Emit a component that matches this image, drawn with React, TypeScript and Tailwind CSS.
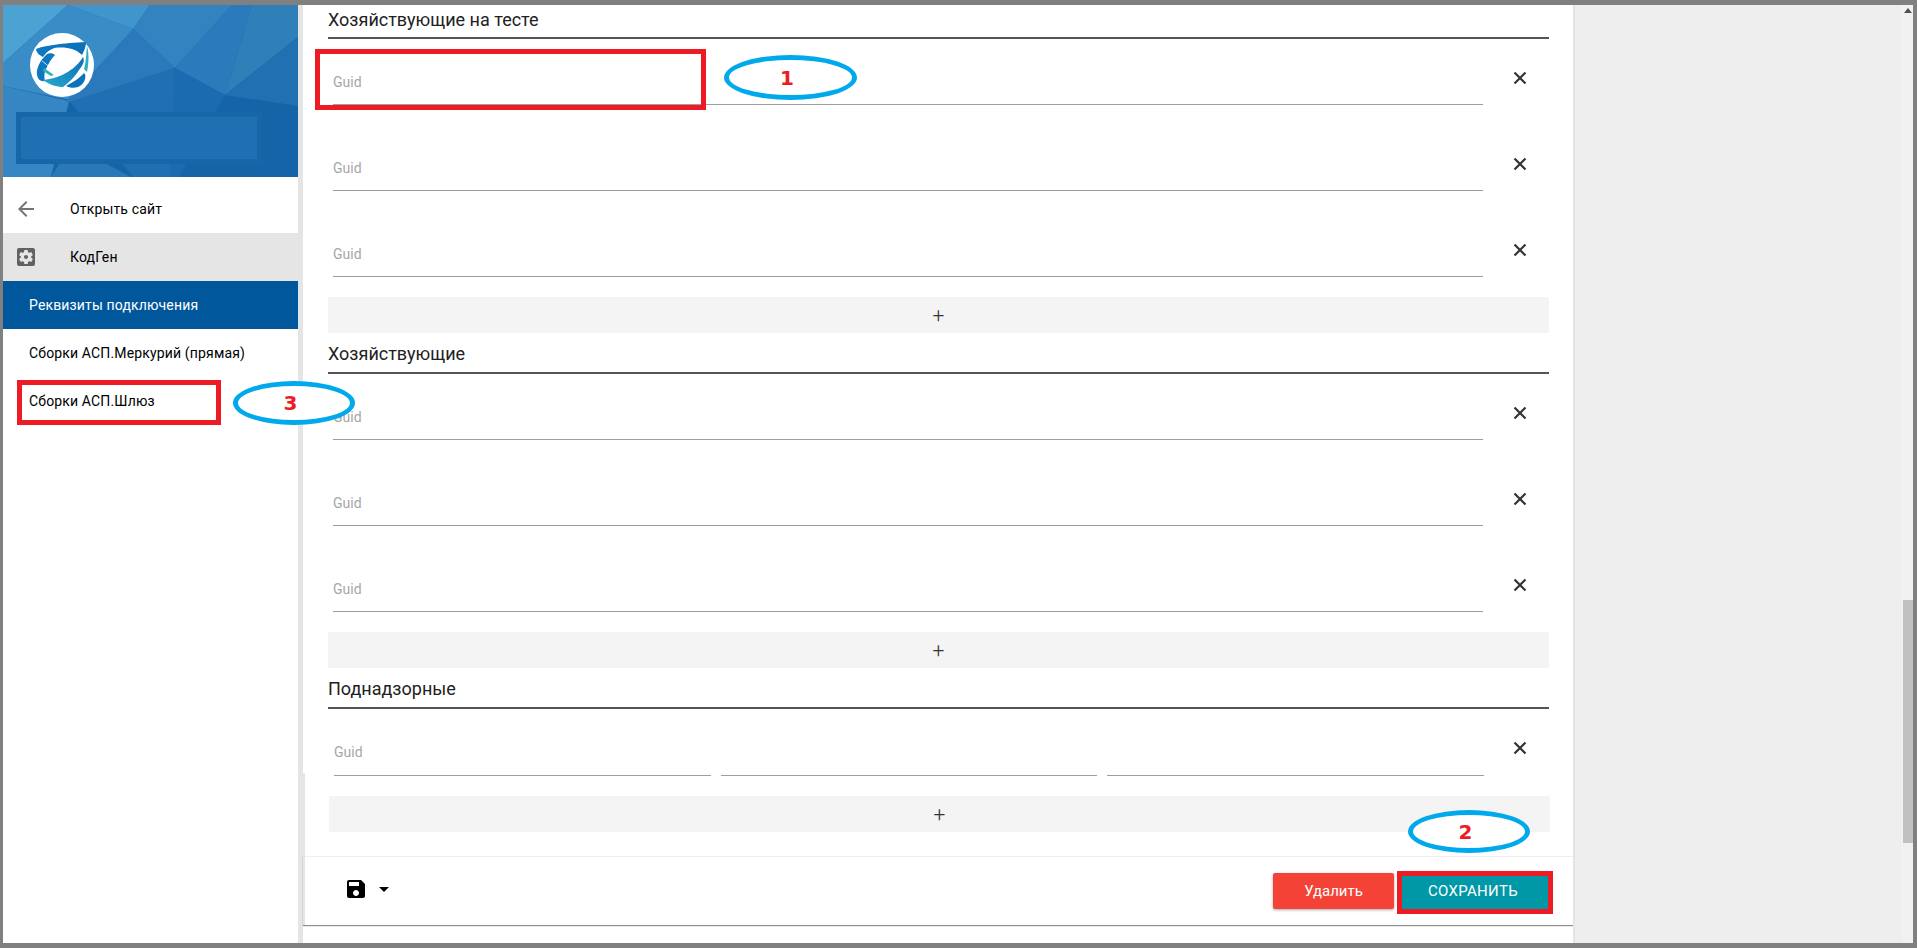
import React from "react";
import { MdArrowBack, MdSettingsApplications, MdSave, MdArrowDropDown } from "react-icons/md";

const roboto = "font-['Roboto','Liberation_Sans',sans-serif]";

function HeaderArt() {
  const facets: [string, string][] = [
    ["0,0 295,0 295,172 0,172", "#1664a8"],
    ["0,0 65,0 0,58", "#4aa3d2"],
    ["65,0 130,24 67,95 0,81 0,58", "#3a8cc7"],
    ["65,0 147,0 130,24", "#4195cd"],
    ["147,0 229,0 172,63 130,24", "#3383c0"],
    ["229,0 249,0 222,90 172,63", "#2b7abb"],
    ["249,0 295,0 295,32 222,90", "#2f7fb9"],
    ["295,32 295,101 222,90", "#2070b2"],
    ["130,24 172,63 67,97 64,95", "#2b79ba"],
    ["0,81 66,96 48,172 0,172", "#3586c3"],
    ["67,97 172,63 168,172 130,172", "#1f6fb2"],
    ["172,63 222,90 176,172 168,172", "#1b6bb0"],
    ["48,172 68,140 128,172", "#2a78b8"],
  ];
  return (
    <svg viewBox="0 0 295 172" className="block h-full w-full" preserveAspectRatio="none">
      {facets.map(([p, c]) => (
        <polygon key={p} points={p} fill={c} />
      ))}
    </svg>
  );
}

function Logo() {
  return (
    <svg viewBox="0 0 64 64" className="h-[64px] w-[64px]">
      <defs>
        <linearGradient id="lg1" x1="0" y1="1" x2="1" y2="0">
          <stop offset="0" stopColor="#2aa9c6" />
          <stop offset="0.45" stopColor="#1b8fc6" />
          <stop offset="1" stopColor="#0a6fb8" />
        </linearGradient>
        <linearGradient id="lg2" x1="0" y1="0" x2="1" y2="0">
          <stop offset="0" stopColor="#0f78c2" />
          <stop offset="1" stopColor="#0b70b9" />
        </linearGradient>
      </defs>
      <circle cx="32" cy="32" r="32" fill="#fff" />
      <path d="M6 16C12 13 34 10 56 9C56 14 54 18 52 22C46 16 38 14 28 14.5C22 15 17 18 13 24C9 22 6 19 6 16Z" fill="url(#lg2)" />
      <path d="M17 21C10 27 6 36 7 42C8 47 11 49 15 48C14 44 14 39 17 34C19 30 21 26 25 22C23 20 19 20 17 21Z" fill="#0c78c2" />
      <path d="M53 24C47 34 34 45 13 47C20 52 27 54 33 54C38 50 45 44 49 37C53 32 55 28 53 24Z" fill="url(#lg1)" />
      <path d="M57 13C59 20 59 29 57 39L54 36C56 30 56 22 57 13Z" fill="#2eb0bf" />
      <path d="M36 53C44 57 53 54 55 46C56 43 55 41 54 40C50 45 43 49 36 53Z" fill="#0c72bc" />
      <path d="M14 35L24 42L21 43L13 38Z" fill="#2eb0bf" />
      <path d="M12 28C16 31 20 34 26 40" stroke="#fff" strokeWidth="0.8" fill="none" />
    </svg>
  );
}

function CloseIcon() {
  return (
    <svg viewBox="0 0 20 20" className="block h-[20px] w-[20px]" fill="none" stroke="#333333" strokeWidth="2.2">
      <path d="M4.5 4.5L15.5 15.5M15.5 4.5L4.5 15.5" />
    </svg>
  );
}

function GuidRow({ triple = false }: { triple?: boolean }) {
  const input = (placeholder?: string) => (
    <input
      placeholder={placeholder}
      readOnly
      className={`h-[45px] w-full min-w-0 flex-1 border-b border-[#9e9e9e] bg-transparent text-sm outline-none placeholder:text-[#a6a6a6] ${roboto} ${
        triple ? "pb-[2px]" : ""
      }`}
    />
  );
  return (
    <div className={`flex h-[66px] ${triple ? "pl-[6px]" : "pl-[5px]"}`}>
      <div className="mt-[21px] flex w-[1150px] gap-[10px] self-start">
        {input("Guid")}
        {triple && input()}
        {triple && input()}
      </div>
      <div className={`mt-[29px] ml-[27px] h-[20px] w-[20px] ${triple ? "-translate-x-px -translate-y-px" : ""}`}>
        <CloseIcon />
      </div>
    </div>
  );
}

function AddButton({ shifted = false }: { shifted?: boolean }) {
  return (
    <div
      className={`mt-5 flex h-[36px] items-center justify-center rounded-[2px] bg-[#f4f4f4] text-[21px] font-light leading-none text-[#333333] ${roboto} ${
        shifted ? "translate-x-px" : ""
      }`}
    >
      +
    </div>
  );
}

function Section({ title, first = false, children }: { title: string; first?: boolean; children: React.ReactNode }) {
  return (
    <section>
      <div
        className={`flex items-end border-b-2 border-[#555555] text-lg leading-[22px] text-[#212121] ${roboto} ${
          first ? "h-[34px] pb-[6px]" : "h-[41px] pb-[7px]"
        }`}
      >
        {title}
      </div>
      {children}
    </section>
  );
}

function NavRow({ children, className = "" }: { children: React.ReactNode; className?: string }) {
  return (
    <div className={`flex h-[48px] items-center text-sm tracking-[0.15px] ${roboto} ${className}`}>{children}</div>
  );
}

function Bubble({ n, className }: { n: string; className: string }) {
  return (
    <div
      className={`absolute flex items-center justify-center rounded-[50%] border-[5px] border-[#00a8ec] bg-white pr-[7px] text-[20px] font-bold leading-none text-[#ed1c24] font-['DejaVu_Sans',sans-serif] ${className}`}
    >
      {n}
    </div>
  );
}

export default function App() {
  return (
    <div className="relative flex h-[948px] w-[1917px] overflow-hidden bg-[#808080] pt-[5px] pr-[4px] pb-[5px] pl-[3px]">
      {/* Sidebar */}
      <aside className="flex w-[295px] shrink-0 flex-col bg-white">
        <div className="relative h-[172px]">
          <HeaderArt />
          <div className="absolute top-[28px] left-[27px]">
            <Logo />
          </div>
          <div className="absolute top-[107px] left-[13px] h-[52px] w-[246px] border-[5px] border-[#1766a8] bg-[#1f6fb3]" />
        </div>
        <div className="pt-2">
          <NavRow className="text-black">
            <MdArrowBack size={24} className="ml-[11px] text-[#757575]" />
            <span className="ml-[32px]">Открыть сайт</span>
          </NavRow>
          <NavRow className="bg-[#e5e5e5] text-black">
            <MdSettingsApplications size={24} className="ml-[11px] text-[#616161]" />
            <span className="ml-[32px]">КодГен</span>
          </NavRow>
          <NavRow className="bg-[#01579b] pl-[26px] text-white">Реквизиты подключения</NavRow>
          <NavRow className="pl-[26px] text-black">Сборки АСП.Меркурий (прямая)</NavRow>
          <NavRow className="pl-[26px] text-black">Сборки АСП.Шлюз</NavRow>
        </div>
      </aside>

      {/* Divider */}
      <div className="w-[5px] shrink-0 bg-[#e5e5e5]" />

      {/* Main */}
      <main className="flex w-[1270px] shrink-0 flex-col bg-white">
        <div className="pr-[24px] pl-[25px]">
          <Section title="Хозяйствующие на тесте" first>
            <GuidRow />
            <div className="mt-5"><GuidRow /></div>
            <div className="mt-5"><GuidRow /></div>
            <AddButton />
          </Section>
          <Section title="Хозяйствующие">
            <GuidRow />
            <div className="mt-5"><GuidRow /></div>
            <div className="mt-5"><GuidRow /></div>
            <AddButton />
          </Section>
          <Section title="Поднадзорные">
            <div className="pt-px">
              <GuidRow triple />
            </div>
            <AddButton shifted />
          </Section>
        </div>
        <footer className="mt-6 flex h-[69px] items-center border-t border-[#eeeeee] pr-[25px] pl-[41px] shadow-[0_1px_1px_rgba(0,0,0,0.45)]">
          <div className="mb-1 flex items-center">
            <MdSave size={24} className="text-black" />
            <MdArrowDropDown size={24} className="ml-[4px] text-black" />
          </div>
          <div className="ml-auto flex gap-1">
            <button className={`h-[36px] w-[121px] rounded-[2px] bg-[#f44336] text-[15px] text-white shadow-[0_1px_3px_rgba(0,0,0,0.35)] ${roboto}`}>
              Удалить
            </button>
            <button className={`h-[36px] w-[150px] bg-[#0097a7] text-[15px] tracking-[0.3px] text-white ${roboto}`}>
              СОХРАНИТЬ
            </button>
          </div>
        </footer>
      </main>

      {/* Right empty panel with scrollbar */}
      <div className="flex min-w-0 flex-1 border-l-2 border-[#e4e4e4] bg-[#eeeeee]">
        <div className="ml-auto flex w-[12px] flex-col items-end bg-[#f1f1f1]">
          <svg viewBox="0 0 8 5" className="mt-[3px] mr-[1px] h-[5px] w-[8px]">
            <polygon points="4,0 8,5 0,5" fill="#505050" />
          </svg>
          <div className="mt-[587px] h-[243px] w-[10px] bg-[#c1c1c1]" />
        </div>
      </div>

      {/* Annotations */}
      <div className="absolute top-[773px] left-[303px] h-[152px] w-[2px] bg-[#e5e5e5]" />
      <div className="absolute top-[49px] left-[315px] h-[61px] w-[391px] border-[5px] border-[#ed1c24]" />
      <Bubble n="1" className="top-[55px] left-[724px] h-[45px] w-[133px]" />
      <div className="absolute top-[871px] left-[1397px] h-[43px] w-[156px] border-[5px] border-[#ed1c24]" />
      <Bubble n="2" className="top-[810px] left-[1408px] h-[43px] w-[122px]" />
      <div className="absolute top-[380px] left-[17px] h-[45px] w-[204px] border-[5px] border-[#ed1c24]" />
      <Bubble n="3" className="top-[381px] left-[233px] h-[44px] w-[122px]" />
    </div>
  );
}
